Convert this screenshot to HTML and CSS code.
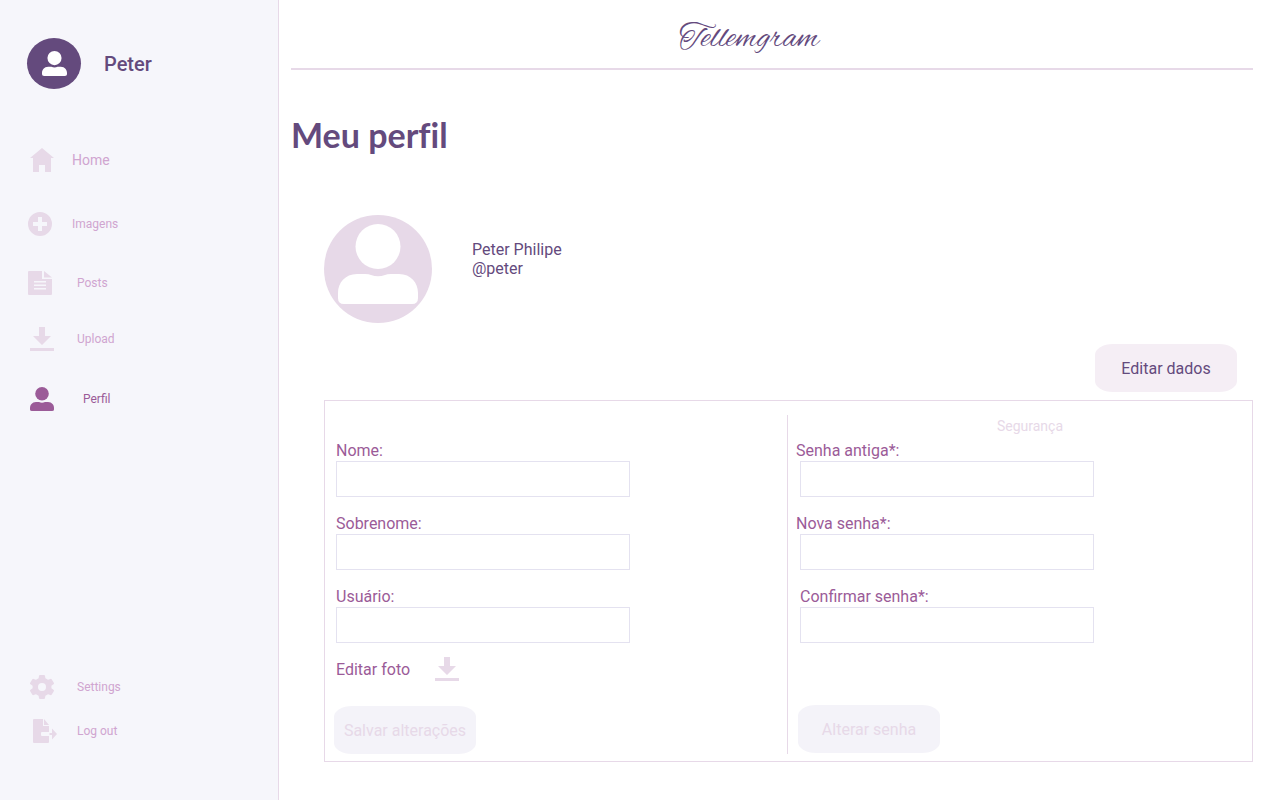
FILE: index.html
```html
<!DOCTYPE html>
<html lang="pt-BR">
<head>
<meta charset="utf-8">
<meta name="viewport" content="width=device-width, initial-scale=1">
<title>Tellemgram - Meu perfil</title>
<link rel="stylesheet" href="styles.css">
</head>
<body>
<svg class="sprite" aria-hidden="true">
  <symbol id="person" viewBox="0 0 24 24">
    <circle cx="12" cy="6.8" r="6.8"/>
    <path d="M6 15H9Q12 16.6 15 15H18C22 15.2 24 18 24 21V22.400Q24 24 22 24H2Q0 24 0 22.400V21C0 18 2 15.200 6 15Z"/>
  </symbol>
  <symbol id="download" viewBox="0 0 24 24">
    <path d="M9 0h6v9h6l-9 9-9-9h6zM0 21h24v3H0z"/>
  </symbol>
</svg>
<div class="app">
  <aside class="sidebar">
    <div class="account">
      <span class="badge"><svg class="badge-icon"><use href="#person"/></svg></span>
      <span class="account-name">Peter</span>
    </div>
    <nav class="nav">
      <a class="link link-home" href="#"><svg class="icon" viewBox="0 0 24 24"><path d="M12 0l12 10h-3v14h-6v-7H9v7H3V10H0z"/></svg>Home</a>
      <a class="link link-edge" href="#"><svg class="icon" viewBox="0 0 24 24"><path fill-rule="evenodd" d="M12 0a12 12 0 1 1 0 24 12 12 0 0 1 0-24zM10 5v5H5v4h5v5h4v-5h5v-4h-5V5z"/></svg>Imagens</a>
      <a class="link link-edge link-wide" href="#"><svg class="icon" viewBox="0 0 24 24"><path fill-rule="evenodd" d="M1 0h13v8h10v15q0 1-1 1H1q-1 0-1-1V1q0-1 1-1zM6 10v1.500h12V10zM6 13.500V15h12v-1.500zM6 17v1.500h12V17z"/><path d="M16 0l8 6.500h-8z"/></svg>Posts</a>
      <a class="link link-wide" href="#"><svg class="icon"><use href="#download"/></svg>Upload</a>
      <a class="link link-active" href="#" aria-current="page"><svg class="icon"><use href="#person"/></svg>Perfil</a>
    </nav>
    <nav class="nav-bottom">
      <a class="link link-wide" href="#"><svg class="icon" viewBox="0 0 24 24"><path fill-rule="evenodd" d="M9 1Q9 0 10 0h4q1 0 1 1l.4 2.300 2.600 1.500 2.300-.9q1-.3 1.500.5l2 3.400q.5.900-.3 1.500L21.400 10.800v2.400l2.100 1.500q.8.600.3 1.500l-2 3.400q-.5.800-1.500.5l-2.300-.9-2.600 1.500L15 23q0 1-1 1h-4q-1 0-1-1l-.4-2.300L6 19.200l-2.300.9q-1 .3-1.500-.5l-2-3.400q-.5-.9.300-1.500l2.100-1.500v-2.400L.5 9.300Q-.3 8.700.2 7.800l2-3.400q.5-.8 1.500-.5l2.300.9 2.600-1.500zM12 8a4 4 0 1 0 0 8 4 4 0 0 0 0-8z"/></svg>Settings</a>
      <a class="link link-exit" href="#"><svg class="icon" viewBox="0 0 24 24"><path d="M1 0h9v7h6v6H9q-1 0-1 1v2q0 1 1 1h7v6q0 1-1 1H1q-1 0-1-1V1q0-1 1-1z"/><path d="M11 0l5 6h-5zM16.500 14H19v-4.500l5 5.500-5 5.500V16h-2.500z"/></svg>Log out</a>
    </nav>
  </aside>
  <main class="main">
    <header class="header"><span class="logo">Tellemgram</span></header>
    <h1 class="title">Meu perfil</h1>
    <div class="content">
      <section class="profile">
        <svg class="avatar" viewBox="0 0 108 108"><circle class="avatar-back" cx="54" cy="54" r="54"/><circle class="avatar-front" cx="54" cy="31.500" r="22.500"/><path class="avatar-front" d="M33 59h8q4 0 6 1 7 2.500 14 0 2-1 6-1h8c12 0 19 9 19 19v5q0 6-6 6H20q-6 0-6-6v-5c0-10 7-19 19-19z"/></svg>
        <p class="identity">Peter Philipe<br>@peter</p>
      </section>
      <div class="actions"><button class="button button-edit" type="button">Editar dados</button></div>
      <div class="panel">
        <form class="column">
          <div class="field field-first"><label for="nome">Nome:</label><input id="nome" type="text"></div>
          <div class="field"><label for="sobrenome">Sobrenome:</label><input id="sobrenome" type="text"></div>
          <div class="field"><label for="usuario">Usuário:</label><input id="usuario" type="text"></div>
          <button class="photo" type="button">Editar foto<svg class="icon"><use href="#download"/></svg></button>
          <button class="button button-form" type="button" disabled>Salvar alterações</button>
        </form>
        <form class="column column-security">
          <h2 class="subtitle">Segurança</h2>
          <div class="field"><label class="outdent" for="antiga">Senha antiga*:</label><input id="antiga" type="password"></div>
          <div class="field"><label class="outdent" for="nova">Nova senha*:</label><input id="nova" type="password"></div>
          <div class="field"><label for="confirmar">Confirmar senha*:</label><input id="confirmar" type="password"></div>
          <button class="button button-form button-password" type="button" disabled>Alterar senha</button>
        </form>
      </div>
    </div>
  </main>
</div>
</body>
</html>
```
FILE: styles.css
```css
* { box-sizing: border-box; }

body {
  margin: 0;
  background: #fff;
  color: #644a7d;
  font-family: Roboto, "Liberation Sans", sans-serif;
  font-size: 16px;
}

button, input { font: inherit; color: inherit; }
.sprite { position: absolute; width: 0; height: 0; }

.app { display: flex; min-height: 100vh; }

.sidebar {
  flex: none;
  display: flex;
  flex-direction: column;
  width: 279px;
  padding: 38px 0 48px;
  background: #f6f6fb;
  border-right: 1px solid #e7d9e8;
}

.account { display: flex; align-items: center; gap: 23px; padding-left: 27px; }
.badge {
  display: grid;
  place-items: center;
  width: 54px;
  height: 51px;
  border-radius: 50%;
  background: #644a7d;
}
.badge-icon { width: 25px; height: 25px; fill: #fff; }
.account-name { font-size: 20px; font-weight: 500; }

.nav { display: grid; grid-template-rows: 64px 64px 54px 58px 62px; margin-top: 39px; }
.nav-bottom { display: grid; grid-auto-rows: 44px; margin-top: auto; }

.link {
  display: flex;
  align-items: center;
  gap: 18px;
  padding-left: 30px;
  color: #d0a5d0;
  font-size: 12px;
  text-decoration: none;
}
.icon { flex: none; width: 24px; height: 24px; fill: #e7d9e8; }
.link-home { font-size: 14px; }
.link-edge { gap: 20px; padding-left: 28px; }
.link-wide { gap: 23px; }
.link-edge.link-wide { gap: 25px; }
.link-exit { gap: 20px; padding-left: 33px; }
.link-active { gap: 29px; color: #9b5b98; }
.link-active .icon { fill: #9b5b98; }

.main { flex: 1; min-width: 0; padding: 0 27px 39px 12px; }

.header {
  display: flex;
  justify-content: center;
  height: 70px;
  padding: 19px 46px 0 0;
  border-bottom: 2px solid #e7d9e8;
}
.logo {
  font-family: "Alex Brush", "Allura", cursive;
  font-size: 34px;
  line-height: 40px;
}

.title {
  margin: 41px 0 0;
  font-family: Lato, sans-serif;
  font-size: 34px;
  font-weight: 700;
  font-variant-ligatures: none;
  line-height: 48px;
}

.content { margin: 56px 0 0 33px; }
.profile { display: flex; gap: 40px; }
.avatar { width: 108px; height: 108px; }
.avatar-back { fill: #e7d9e8; }
.avatar-front { fill: #fff; }
.identity { margin: 25px 0 0; line-height: 19px; }

.actions { display: flex; justify-content: flex-end; padding: 21px 16px 8px 0; }
.button {
  width: 142px;
  height: 48px;
  padding: 0;
  border: 0;
  border-radius: 18px / 11px;
}
.button-edit { background: #f5eef5; }

.panel {
  display: grid;
  grid-template-columns: 1fr 1fr;
  padding: 14px 3px 7px 0;
  border: 1px solid #e7d9e8;
}
.column {
  display: flex;
  flex-direction: column;
  align-items: flex-start;
  padding-left: 11px;
  color: #9b5b98;
}
.column-security { padding-left: 12px; border-left: 1px solid #e7d9e8; }
.field { display: flex; flex-direction: column; width: 294px; max-width: 100%; margin-bottom: 17px; }
.field-first { margin-top: 26px; }
.field label { line-height: 20px; }
.field input { height: 36px; padding: 0 8px; background: #fff; border: 1px solid #e4e2f0; }
.outdent { margin-left: -4px; }

.subtitle {
  align-self: stretch;
  margin: 0 0 3px;
  padding-left: 11px;
  color: #e7d9e8;
  font-size: 14px;
  font-weight: 400;
  line-height: 23px;
  text-align: center;
}

.photo {
  display: flex;
  align-items: center;
  gap: 25px;
  margin: -3px 0 25px;
  padding: 0;
  background: none;
  border: 0;
}
.button-form { margin-left: -2px; background: #f4f3f9; color: #e7d9e8; }
.button-password { margin-top: 45px; }
```
